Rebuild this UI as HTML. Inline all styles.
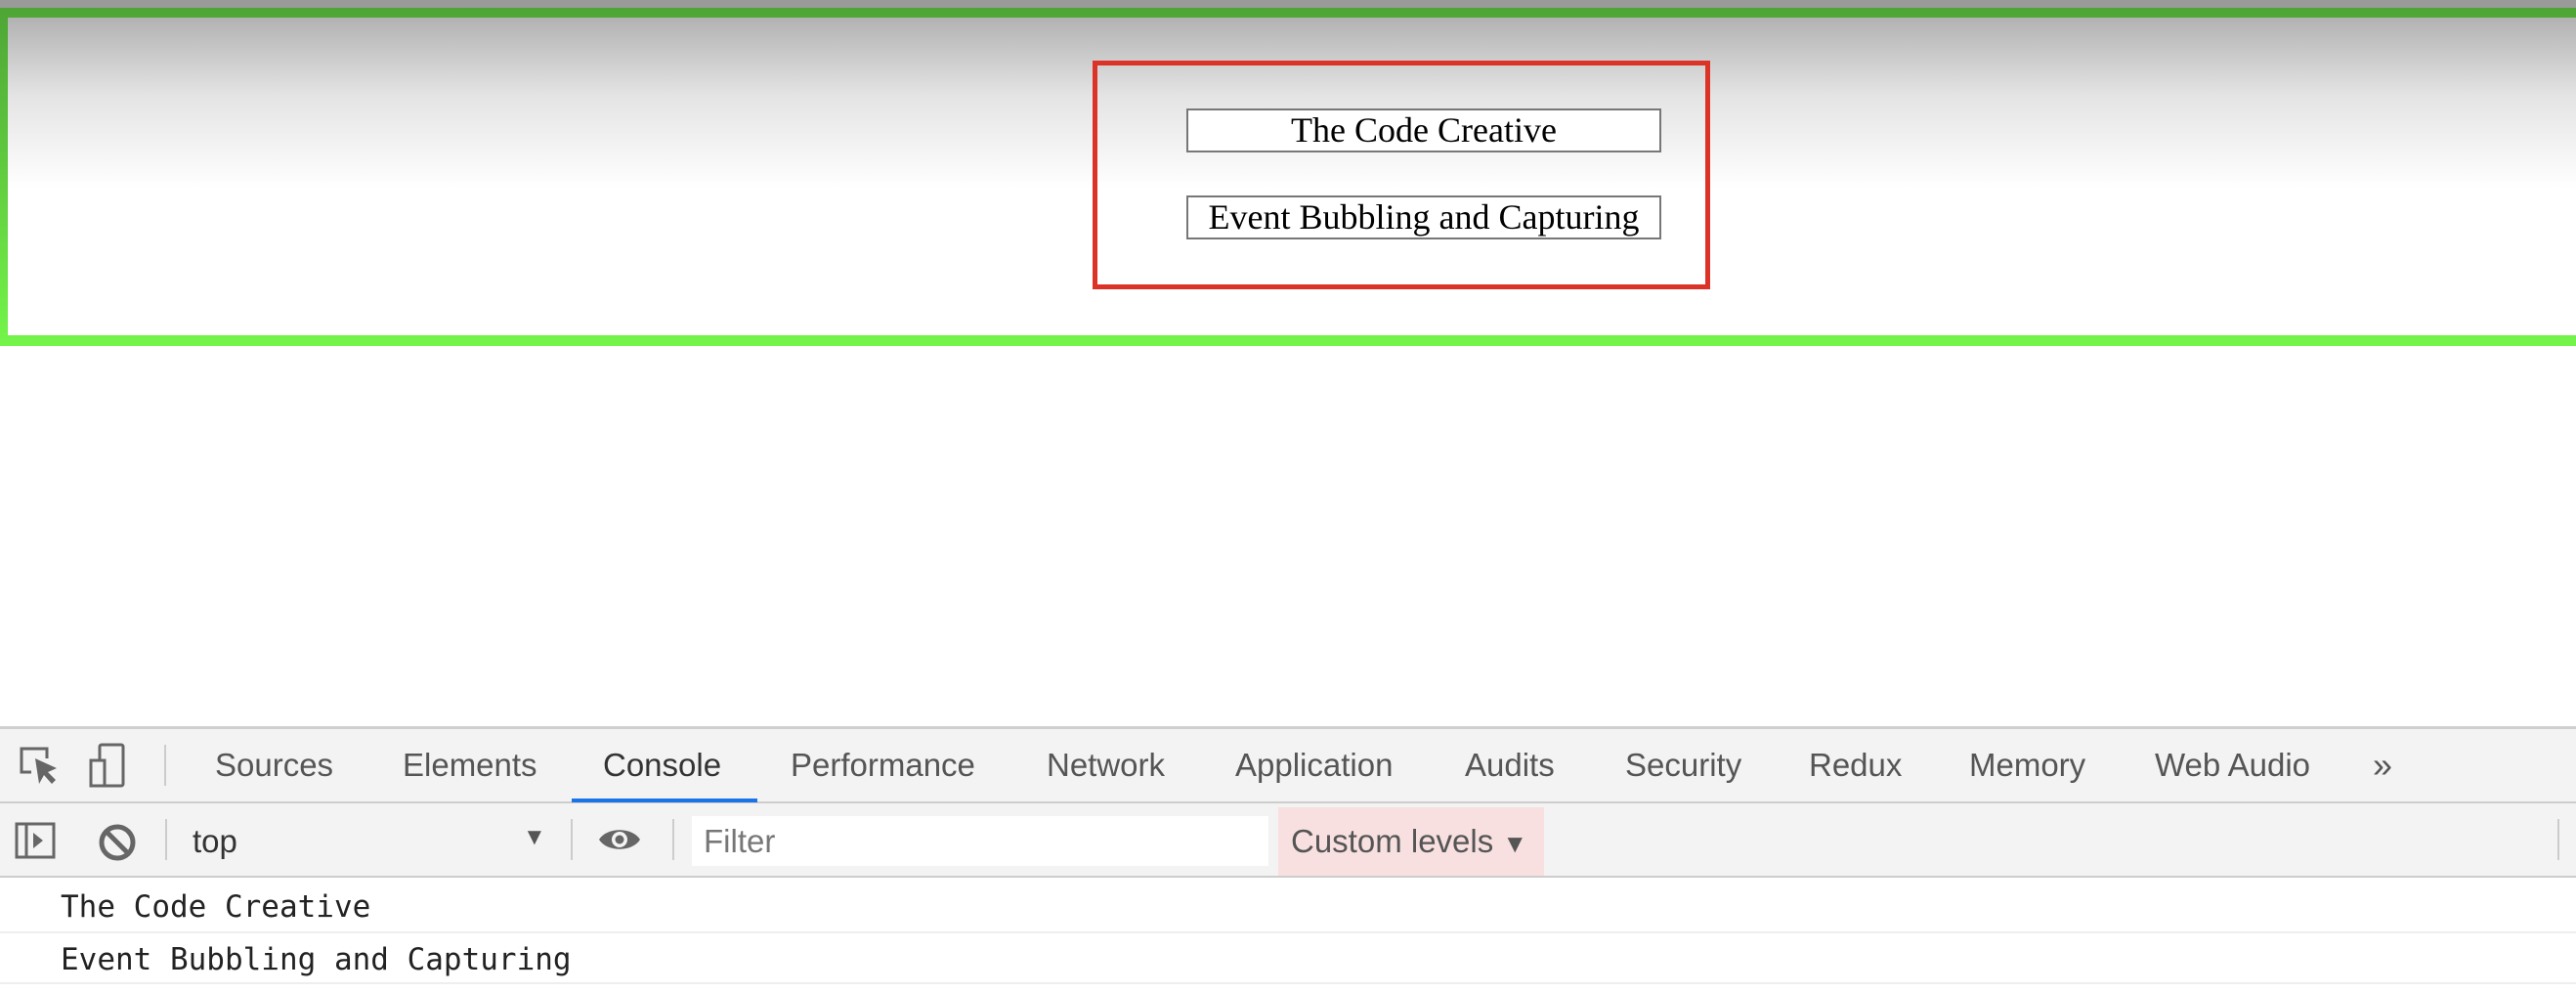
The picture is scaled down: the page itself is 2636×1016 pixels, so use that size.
<!DOCTYPE html>
<html><head><meta charset="utf-8"><style>
*{margin:0;padding:0;box-sizing:border-box}
body{width:2636px;height:1016px;position:relative;background:#fff;overflow:hidden;font-family:"Liberation Sans",sans-serif}
.a{position:absolute}
.tab{position:absolute;top:745px;height:75px;line-height:75px;font-size:33px;color:#555}
.btn{position:absolute;left:1214px;width:486px;height:45px;border:2px solid #777;background:#fff;font-family:"Liberation Serif",serif;font-size:36px;text-align:center;line-height:40px;color:#000}
.mono{position:absolute;left:62px;font-family:"DejaVu Sans Mono","Liberation Mono",monospace;font-size:31px;color:#222;line-height:40px}
</style></head><body>
<div class="a" style="left:0;top:0;width:2636px;height:9px;background:#9a9a9a"></div>
<div class="a" style="left:0;top:8px;width:2660px;height:346px;background:linear-gradient(#4ea535,#74f54a)"></div>
<div class="a" style="left:8px;top:18px;width:2660px;height:325px;background:linear-gradient(#b2b2b2 0px,#e4e4e4 80px,#fff 175px,#fff)"></div>
<div class="a" style="left:1118px;top:62px;width:632px;height:234px;border:5px solid #db3328;"></div>
<div class="btn" style="top:111px">The Code Creative</div>
<div class="btn" style="top:200px">Event Bubbling and Capturing</div>

<div class="a" style="left:0;top:743px;width:2636px;height:3px;background:#cfcfcf"></div>
<div class="a" style="left:0;top:746px;width:2636px;height:74px;background:#f3f3f3"></div>
<div class="a" style="left:0;top:820px;width:2636px;height:2px;background:#cdcdcd"></div>
<div class="a" style="left:0;top:822px;width:2636px;height:74px;background:#f3f3f3"></div>
<div class="a" style="left:0;top:896px;width:2636px;height:2px;background:#cdcdcd"></div>
<svg class="a" style="left:16px;top:760px" width="48" height="48" viewBox="0 0 48 48"><path d="M16 30H6V6h26v10" fill="none" stroke="#666" stroke-width="3"/><path d="M20 16l4 26 5-9 8 9 4-4-8-8 9-4z" fill="#666"/></svg>
<svg class="a" style="left:90px;top:760px" width="48" height="48" viewBox="0 0 48 48"><rect x="12" y="2" width="24" height="42" rx="2" fill="none" stroke="#666" stroke-width="3"/><rect x="3" y="18" width="14" height="26" fill="#f3f3f3" stroke="#666" stroke-width="3"/></svg>
<div class="a" style="left:168px;top:762px;width:2px;height:42px;background:#ccc"></div>
<div class="tab" style="left:220px">Sources</div>
<div class="tab" style="left:412px">Elements</div>
<div class="tab" style="left:617px;color:#333">Console</div>
<div class="a" style="left:585px;top:817px;width:190px;height:4px;background:#1a73e8"></div>
<div class="tab" style="left:809px">Performance</div>
<div class="tab" style="left:1071px">Network</div>
<div class="tab" style="left:1264px">Application</div>
<div class="tab" style="left:1499px">Audits</div>
<div class="tab" style="left:1663px">Security</div>
<div class="tab" style="left:1851px">Redux</div>
<div class="tab" style="left:2015px">Memory</div>
<div class="tab" style="left:2205px">Web Audio</div>
<div class="tab" style="left:2428px;font-size:36px">»</div>

<svg class="a" style="left:14px;top:838px" width="46" height="46" viewBox="0 0 46 46"><rect x="3" y="5" width="38" height="34" fill="none" stroke="#666" stroke-width="3"/><line x1="13" y1="5" x2="13" y2="39" stroke="#666" stroke-width="3"/><path d="M20 14l10 8-10 8z" fill="#666"/></svg>
<svg class="a" style="left:98px;top:840px" width="44" height="44" viewBox="0 0 44 44"><circle cx="22" cy="22" r="16" fill="none" stroke="#666" stroke-width="5"/><line x1="11" y1="11" x2="33" y2="33" stroke="#666" stroke-width="5"/></svg>
<div class="a" style="left:169px;top:838px;width:2px;height:42px;background:#ccc"></div>
<div class="a" style="left:197px;top:840px;font-size:33px;color:#333;line-height:42px">top</div>
<div class="a" style="left:535px;top:843px;font-size:24px;color:#555">▼</div>
<div class="a" style="left:584px;top:838px;width:2px;height:42px;background:#ccc"></div>
<svg class="a" style="left:611px;top:842px" width="46" height="34" viewBox="0 0 46 34"><path d="M2 17C10 4 36 4 44 17 36 30 10 30 2 17z" fill="#666"/><circle cx="23" cy="17" r="8" fill="#f3f3f3"/><circle cx="23" cy="17" r="4.5" fill="#666"/></svg>
<div class="a" style="left:688px;top:838px;width:2px;height:42px;background:#ccc"></div>
<div class="a" style="left:708px;top:835px;width:590px;height:51px;background:#fff"></div>
<div class="a" style="left:720px;top:840px;font-size:33px;color:#777;line-height:42px">Filter</div>
<div class="a" style="left:1308px;top:826px;width:272px;height:70px;background:#f8e0e0"></div>
<div class="a" style="left:1321px;top:840px;font-size:33px;color:#555;line-height:42px">Custom levels <span style="font-size:26px">▼</span></div>
<div class="a" style="left:2617px;top:838px;width:2px;height:42px;background:#ccc"></div>

<div class="mono" style="top:908px">The Code Creative</div>
<div class="a" style="left:0;top:953px;width:2636px;height:2px;background:#eee"></div>
<div class="mono" style="top:962px">Event Bubbling and Capturing</div>
<div class="a" style="left:0;top:1005px;width:2636px;height:2px;background:#eee"></div>
</body></html>
